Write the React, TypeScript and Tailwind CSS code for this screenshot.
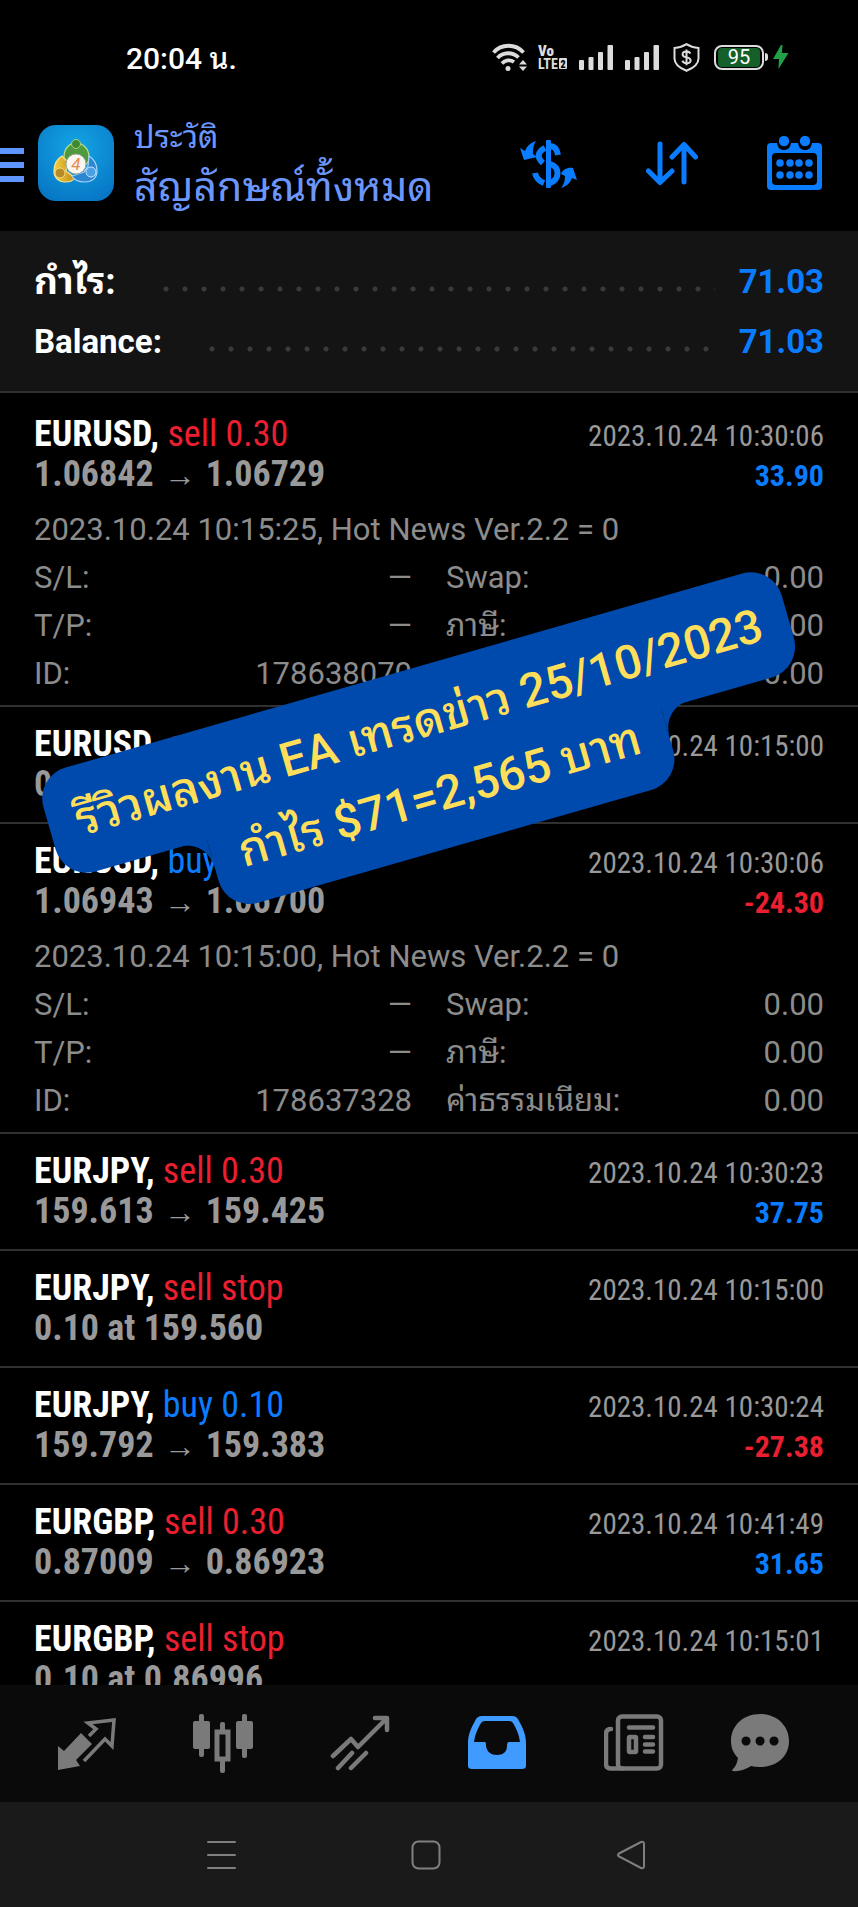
import { clsx } from 'clsx'

type Deal = {
    symbol: string
    side: string
    type: 'buy' | 'sell'
    from: string
    to?: string
    time: string
    profit?: string
    comment?: string
    id?: string
}

const deals: Deal[] = [
    { symbol: 'EURUSD', side: 'sell 0.30', type: 'sell', from: '1.06842', to: '1.06729', time: '2023.10.24 10:30:06', profit: '33.90', comment: '2023.10.24 10:15:25, Hot News Ver.2.2 = 0', id: '178638070' },
    { symbol: 'EURUSD', side: 'sell stop', type: 'sell', from: '0.10 at 1.06710', time: '2023.10.24 10:15:00' },
    { symbol: 'EURUSD', side: 'buy 0.10', type: 'buy', from: '1.06943', to: '1.06700', time: '2023.10.24 10:30:06', profit: '-24.30', comment: '2023.10.24 10:15:00, Hot News Ver.2.2 = 0', id: '178637328' },
    { symbol: 'EURJPY', side: 'sell 0.30', type: 'sell', from: '159.613', to: '159.425', time: '2023.10.24 10:30:23', profit: '37.75' },
    { symbol: 'EURJPY', side: 'sell stop', type: 'sell', from: '0.10 at 159.560', time: '2023.10.24 10:15:00' },
    { symbol: 'EURJPY', side: 'buy 0.10', type: 'buy', from: '159.792', to: '159.383', time: '2023.10.24 10:30:24', profit: '-27.38' },
    { symbol: 'EURGBP', side: 'sell 0.30', type: 'sell', from: '0.87009', to: '0.86923', time: '2023.10.24 10:41:49', profit: '31.65' },
    { symbol: 'EURGBP', side: 'sell stop', type: 'sell', from: '0.10 at 0.86996', time: '2023.10.24 10:15:01' },
]

function Signal() {
    return (
        <svg className="w-[34px] h-7" viewBox="0 0 34 28" fill="#dcdcdc">
            <rect x="0" y="17" width="5" height="10" rx="1" />
            <rect x="9.500" y="14" width="5" height="13" rx="1" />
            <rect x="19" y="9" width="5" height="18" rx="1" />
            <rect x="28.500" y="2" width="5.500" height="25" rx="1" />
        </svg>
    )
}

function StatusBar() {
    return (
        <div className="flex items-center justify-between h-[114px] pl-[126px] pr-[69px] text-white">
            <span className="pt-1 text-[30px] leading-9 font-medium">20:04 น.</span>
            <div className="flex items-center">
                <svg className="w-[36px] h-7" viewBox="0 0 36 28" fill="none" stroke="#dcdcdc" strokeWidth="3.8">
                    <path d="M1.500 9.500a20 20 0 0 1 30 0M5.500 15a14.500 14.500 0 0 1 21-.5M10 20.500a9 9 0 0 1 12-1.500" />
                    <circle cx="16" cy="25.500" r="2.500" fill="#dcdcdc" stroke="none" />
                    <path d="M27 21.500l4-4.500 4 4.500zM27 23.500l4 4.500 4-4.500z" fill="#dcdcdc" stroke="none" />
                </svg>
                <svg className="ml-2.5 w-[29px] h-8" viewBox="0 0 29 32" fill="#dcdcdc">
                    <text x="0" y="15" fontSize="15" fontWeight="900" fontFamily="Roboto Condensed">Vo</text>
                    <text x="0" y="28" fontSize="14" fontWeight="700" fontFamily="Roboto Condensed">LTE</text>
                    <rect x="21" y="17" width="8" height="11" rx="1" />
                    <text x="22.500" y="26.500" fontSize="10" fontWeight="900" fontFamily="Roboto Condensed" fill="#000">2</text>
                </svg>
                <div className="ml-3 flex gap-3">
                    <Signal />
                    <Signal />
                </div>
                <svg className="ml-3.5 w-[27px] h-[29px]" viewBox="0 0 27 29" fill="none" stroke="#dcdcdc" strokeWidth="2">
                    <path d="M13.500 1.200c3.400 2.200 7.400 3.400 12 3.800v10.500c0 6-5 9.500-12 12.300C6.500 25 1.500 21.500 1.500 15.500V5c4.600-.4 8.600-1.600 12-3.800z" />
                    <path d="M17.500 10.500c-1-1.600-2.400-2-4-2-2.400 0-3.900 1.200-3.900 2.900 0 4.200 8 1.800 8 5.800 0 1.800-1.700 3-4 3-1.900 0-3.500-.8-4.300-2.400M13.500 6.500v15.800" />
                </svg>
                <div className="ml-[14px] flex items-center">
                    <div className="flex items-center justify-center w-[50px] h-[25px] rounded-lg border-2 border-[#dcdcdc] p-[2px]">
                        <span className="flex-1 rounded-sm bg-[#15602a] text-center text-xl leading-[19px]">95</span>
                    </div>
                    <span className="ml-px w-[3px] h-2 rounded-r bg-[#dcdcdc]" />
                </div>
                <svg className="ml-[5px] w-4 h-6" viewBox="0 0 16 24" fill="#22a045">
                    <path d="M8 0L0 14h6l-.5 10L15.500 8H9L9.500 0z" />
                </svg>
            </div>
        </div>
    )
}

function Logo() {
    return (
        <svg className="w-[76px] h-[76px]" viewBox="0 0 76 76">
            <defs>
                <radialGradient id="logo-bg" cx="0.5" cy="0.3" r="0.8">
                    <stop offset="0" stopColor="#14a5e6" />
                    <stop offset="1" stopColor="#0673c2" />
                </radialGradient>
                <linearGradient id="logo-y" x1="0" x2="1">
                    <stop offset="0" stopColor="#f4cf3c" />
                    <stop offset="1" stopColor="#c08a18" />
                </linearGradient>
            </defs>
            <rect width="76" height="76" rx="18" fill="url(#logo-bg)" />
            <path d="M26 32c0-8 5-14 12-14s13 6 13 14c0 4-2 7-4 8l-8-8-9 6c-2-1-4-3-4-6z" fill="#4f9a3e" stroke="#b9dc8e" strokeWidth="1.200" />
            <path d="M24 31c-5 3-8 9-8 15 0 7 5 11 11 11 4 0 8-1 10-4l-9-7 1-10z" fill="url(#logo-y)" stroke="#f7e58c" strokeWidth="1.200" />
            <path d="M51 31c5 3 8 9 8 15 0 7-5 11-12 11-6 0-11-2-13-6l12-4 4-6z" fill="#2c86d2" stroke="#a4d6f7" strokeWidth="1.200" />
            <circle cx="38" cy="19" r="4.500" fill="#3d8a32" stroke="#a9d17c" />
            <circle cx="22" cy="48" r="5" fill="#b88a28" stroke="#f3dd84" />
            <circle cx="53" cy="47" r="5" fill="#4aa0e4" stroke="#c5e6fb" />
            <circle cx="38" cy="39" r="10" fill="#fbf6f0" stroke="#9aa39a" />
            <text x="38" y="45" fontSize="17" textAnchor="middle" fill="#ea8a4c" fontFamily="Roboto" fontStyle="italic">4</text>
        </svg>
    )
}

function Header() {
    return (
        <header className="flex items-start h-[117px] pr-9">
            <button aria-label="Menu" className="mt-[34px] mr-[14px] flex flex-col gap-2 w-6">
                <span className="h-1.5 w-full bg-[#5f95ff]" />
                <span className="h-1.5 w-full bg-[#5f95ff]" />
                <span className="h-1.5 w-full bg-[#5f95ff]" />
            </button>
            <div className="mt-[11px]">
                <Logo />
            </div>
            <div className="ml-5 flex-1 text-[#6b96fb]">
                <p className="text-[32px] leading-[46px]">ประวัติ</p>
                <h1 className="text-[41px] leading-[54px]">สัญลักษณ์ทั้งหมด</h1>
            </div>
            <div className="flex items-start gap-[69px] mt-[21px] text-[#0a7cff]">
                <button aria-label="Currency">
                    <svg className="w-[57px] h-14" viewBox="0 0 57 56" fill="currentColor">
                        <rect x="26" y="5" width="5" height="48" rx="1" />
                        <path d="M25 13c-8 4-8 10-2 15" fill="none" stroke="currentColor" strokeWidth="6" />
                        <path d="M30 11c4 0 7 3 8 9M15 38c1 5 4 8 9 10" fill="none" stroke="currentColor" strokeWidth="6" />
                        <path d="M30 29c10 3 10 15 0 19" fill="none" stroke="currentColor" strokeWidth="6" />
                        <path d="M16 6C10 8 7 11 5 16l-5-3 4 12 13-3-4-3c0-5 0-8 3-13z" />
                        <path d="M41 53c6-2 9-5 11-10l5 2-4-12c-5-1-10 1-12 6l4 2c0 5-1 8-4 12z" />
                    </svg>
                </button>
                <button aria-label="Sort">
                    <svg className="w-[52px] h-14" viewBox="0 0 52 56" fill="none" stroke="currentColor" strokeWidth="5" strokeLinecap="round" strokeLinejoin="round">
                        <path d="M14 9v38M2.500 36L14 47.500 26 36M38 47V10M26 22L38 9.500 49.500 22" />
                    </svg>
                </button>
                <button aria-label="Period">
                    <svg className="w-[55px] h-14" viewBox="0 0 55 56" fill="currentColor">
                        <path fillRule="evenodd" d="M4 8h6c1 5 3 7 7 7s6-2 7-7h7c1 5 3 7 7 7s6-2 7-7h6q4 0 4 4v39q0 4-4 4H4q-4 0-4-4V12q0-4 4-4zM9 18q-4 0-4 4v24q0 4 4 4h37q4 0 4-4V22q0-4-4-4z" />
                        <circle cx="17" cy="6" r="5.200" />
                        <circle cx="38" cy="6" r="5.200" />
                        {[13, 23, 32, 42].map((x) => (
                            <g key={x}>
                                <circle cx={x} cy="28" r="3.800" />
                                <circle cx={x} cy="40" r="3.800" />
                            </g>
                        ))}
                    </svg>
                </button>
            </div>
        </header>
    )
}

function SummaryLine({ label, value, large }: { label: string; value: string; large?: boolean }) {
    return (
        <div className="flex items-center h-[60px] text-[33px] font-bold">
            <dt className={clsx('leading-[60px] text-white', large && 'text-[37px]')}>{label}</dt>
            <span className="ml-[47px] mr-6 mt-3.5 flex-1 h-2 bg-[radial-gradient(circle_at_3px_50%,#3a3a3a_2px,transparent_3px)] bg-[length:19px_8px] bg-repeat-x" />
            <dd className="text-[#0a7cff]">{value}</dd>
        </div>
    )
}

function Field({ label, value }: { label: string; value: string }) {
    return (
        <div className="flex justify-between">
            <dt>{label}</dt>
            <dd>{value}</dd>
        </div>
    )
}

function DealRow({ deal }: { deal: Deal }) {
    return (
        <li className={clsx('border-b-2 border-[#303030] px-[34px] pt-[17px]', deal.id ? 'pb-[7px]' : 'pb-[18px]')}>
            <div className="flex items-baseline justify-between h-10 font-['Roboto_Condensed',Roboto]">
                <span className="text-[36px] leading-10 font-bold text-white">
                    {deal.symbol},{' '}
                    <span className={clsx('font-normal', deal.type === 'buy' ? 'text-[#0a7cff]' : 'text-[#ea1f30]')}>{deal.side}</span>
                </span>
                <time className="text-[29px] leading-10 text-[#999999]">{deal.time}</time>
            </div>
            <div className="flex items-baseline justify-between h-10 font-['Roboto_Condensed',Roboto] font-bold">
                <span className="text-[36px] leading-10 text-[#999999]">
                    {deal.from}
                    {deal.to && (
                        <>
                            <span className="mx-2.5 text-[32px] leading-none font-normal">→</span>
                            {deal.to}
                        </>
                    )}
                </span>
                {deal.profit && (
                    <span className={clsx('text-[30px] leading-10', deal.profit.startsWith('-') ? 'text-[#ea1f30]' : 'text-[#0a7cff]')}>
                        {deal.profit}
                    </span>
                )}
            </div>
            {deal.id && (
                <div className="mt-3 text-[31px] leading-[48px] text-[#8c8c8c]">
                    <p>{deal.comment}</p>
                    <dl className="grid grid-cols-2 gap-x-[34px]">
                        <Field label="S/L:" value="—" />
                        <Field label="Swap:" value="0.00" />
                        <Field label="T/P:" value="—" />
                        <Field label="ภาษี:" value="0.00" />
                        <Field label="ID:" value={deal.id} />
                        <Field label="ค่าธรรมเนียม:" value="0.00" />
                    </dl>
                </div>
            )}
        </li>
    )
}

function Banner() {
    return (
        <div className="absolute inset-x-0 top-[667px] flex justify-center">
            <div className="flex flex-col items-center -rotate-16 whitespace-nowrap text-[47px] leading-[108px] font-medium text-[#ffde59]">
                <p className="h-[108px] rounded-[32px] bg-[#004aad] px-7">รีวิวผลงาน EA เทรดข่าว 25/10/2023</p>
                <p className="relative -mt-[33px] h-[108px] rounded-[32px] bg-[#004aad] px-7">
                    กำไร $71=2,565 บาท
                    <span className="absolute top-8 -left-7 size-7 bg-[radial-gradient(circle_at_0_100%,transparent_27px,#004aad_28px)]" />
                    <span className="absolute top-8 -right-7 size-7 bg-[radial-gradient(circle_at_100%_100%,transparent_27px,#004aad_28px)]" />
                </p>
            </div>
        </div>
    )
}

const tabs = [
    {
        name: 'Quotes',
        icon: (
            <svg className="w-[60px] h-[60px]" viewBox="-2 0 60 60">
                <path d="M0 32l6 5L23 19l11 11-16 16 4 6L0 56z" fill="currentColor" />
                <path d="M31 22l7-7-8-6 26-3-2 26-7-7-21 22" fill="none" stroke="currentColor" strokeWidth="3.500" />
            </svg>
        ),
    },
    {
        name: 'Charts',
        icon: (
            <svg className="w-[60px] h-[60px]" viewBox="0 0 60 60" fill="currentColor">
                <rect x="6" y="0" width="5" height="43" rx="2" />
                <rect x="0" y="7" width="17" height="28" rx="2" />
                <rect x="49" y="0" width="5" height="44" rx="2" />
                <rect x="43" y="7" width="17" height="28" rx="2" />
                <rect x="27" y="8" width="5" height="10" rx="2" />
                <rect x="27" y="44" width="5" height="15" rx="2" />
                <rect x="24" y="18" width="11" height="27" fill="none" stroke="currentColor" strokeWidth="5" />
            </svg>
        ),
    },
    {
        name: 'Trade',
        icon: (
            <svg className="w-[60px] h-[60px]" viewBox="0 0 60 60" fill="none" stroke="currentColor" strokeWidth="4.500" strokeLinecap="round" strokeLinejoin="round">
                <path d="M3 42l18-17 7 8L56 5M45 4h12v12M8 54l14-15M21 54l15-15" />
            </svg>
        ),
    },
    {
        name: 'History',
        active: true,
        icon: (
            <svg className="w-[60px] h-[60px]" viewBox="0 0 60 60" fill="currentColor">
                <path fillRule="evenodd" d="M15 2h30q5 0 7 5c4 7 7 14 7 22v23q0 3-4 3H5q-4 0-4-3V29c0-8 3-15 7-22q2-5 7-5zM18 7q-3 0-4 2C11 14 8 20 7 28h11q1 0 1 4c1 6 5 9 11 9s10-3 10-9q0-4 2-4h11c-1-8-4-14-7-19q-1-2-4-2z" />
            </svg>
        ),
    },
    {
        name: 'News',
        icon: (
            <svg className="w-[60px] h-[60px]" viewBox="0 0 60 60" fill="none" stroke="currentColor" strokeWidth="4.500" strokeLinecap="round">
                <rect x="14" y="2.500" width="43" height="52" rx="4" />
                <path d="M7 15q-5 0-5 5v30q0 4.500 5 4.500h11M25 13.500h24M41 23h8M41 30.500h8M41 37.500h8" />
                <rect x="25" y="23" width="7" height="15" rx="1" />
            </svg>
        ),
    },
    {
        name: 'Chat',
        icon: (
            <svg className="w-[60px] h-[60px]" viewBox="0 0 60 60" fill="currentColor">
                <path fillRule="evenodd" d="M30 0c16 0 29 11 29 27S46 53 30 53q-5 0-9-1-9 6-18 5-2 0 0-2c3-3 4-6 5-11C3 39 1 33 1 27 1 11 14 0 30 0zM16 22.500a4.500 4.500 0 1 0 .1 0zM30 22.500a4.500 4.500 0 1 0 .1 0zM44 22.500a4.500 4.500 0 1 0 .1 0z" />
            </svg>
        ),
    },
]

function TabBar() {
    return (
        <nav className="grid grid-cols-[repeat(5,minmax(0,137fr))_minmax(0,115fr)] h-[117px] pl-[17px] pr-[41px] pt-[29px] bg-[#0a0a0a]">
            {tabs.map((tab) => (
                <button
                    key={tab.name}
                    aria-label={tab.name}
                    className={clsx('flex justify-center', tab.active ? 'text-[#3f9bff]' : 'text-[#7a7a7a]')}
                >
                    {tab.icon}
                </button>
            ))}
        </nav>
    )
}

function SystemBar() {
    return (
        <div className="flex items-center justify-center gap-[175px] h-[105px] pr-[7px] bg-[#1a1a1a] text-[#808080]">
            <button aria-label="Recent apps">
                <svg className="w-[30px] h-[30px]" viewBox="0 0 30 30" stroke="currentColor" strokeWidth="2" strokeLinecap="round">
                    <path d="M2 2h27M2 15h27M2 28h27" />
                </svg>
            </button>
            <button aria-label="Home">
                <svg className="w-[30px] h-[30px]" viewBox="0 0 30 30" fill="none" stroke="currentColor" strokeWidth="2">
                    <rect x="1.500" y="1.500" width="27" height="27" rx="6" />
                </svg>
            </button>
            <button aria-label="Back">
                <svg className="w-[30px] h-[30px]" viewBox="0 0 30 30" fill="none" stroke="currentColor" strokeWidth="2">
                    <path d="M3 13.500L25 2q3-1 3 2v22q0 3-3 2L3 16.500q-2-1.500 0-3z" />
                </svg>
            </button>
        </div>
    )
}

export default function App() {
    return (
        <div className="relative flex flex-col h-screen overflow-hidden bg-black font-[Roboto,'Noto_Sans_Thai_Looped','Noto_Looped_Thai',Loma,Garuda,Waree,sans-serif]">
            <StatusBar />
            <Header />
            <dl className="border-b-2 border-[#303030] bg-[#141414] px-[34px] pt-[21px] pb-[19px]">
                <SummaryLine label="กำไร:" value="71.03" large />
                <SummaryLine label="Balance:" value="71.03" />
            </dl>
            <ul className="flex-1 min-h-0 overflow-hidden pt-1">
                {deals.map((deal, i) => (
                    <DealRow key={i} deal={deal} />
                ))}
            </ul>
            <TabBar />
            <SystemBar />
            <Banner />
        </div>
    )
}
